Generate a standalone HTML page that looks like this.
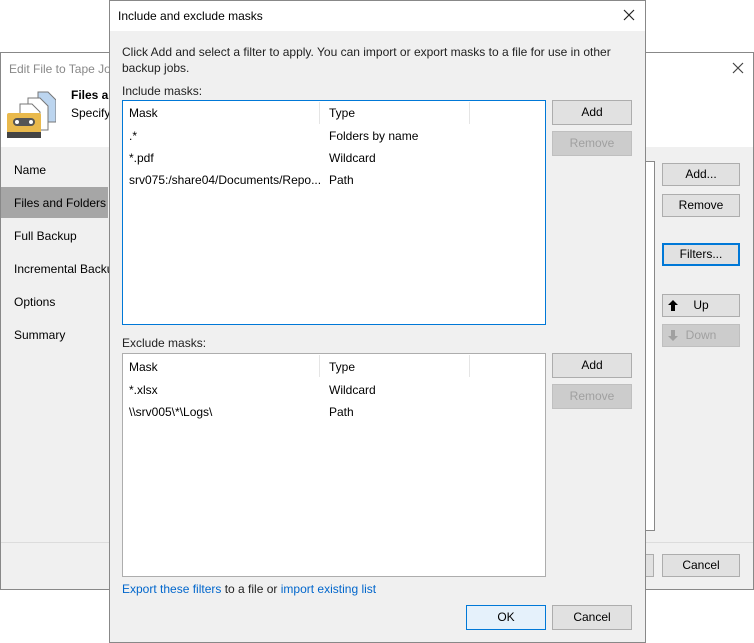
<!DOCTYPE html>
<html><head><style>
*{box-sizing:border-box;margin:0;padding:0}
body{width:754px;height:643px;position:relative;background:#fff;font-family:"Liberation Sans",sans-serif;font-size:12px;color:#000;overflow:hidden}
.a{position:absolute}
.btn{position:absolute;background:#e1e1e1;border:1px solid #adadad;text-align:center;line-height:21px}
.dis{color:#a0a0a0;background:#ccc;border-color:#bfbfbf}
.t{position:absolute;white-space:nowrap}
</style></head><body>
<!-- background window -->
<div class="a" style="left:0;top:52px;width:754px;height:538px;border:1px solid #888;background:#f0f0f0"></div>
<div class="a" style="left:1px;top:53px;width:752px;height:94px;background:#fff"></div>
<div class="t" style="left:9px;top:62px;color:#888">Edit File to Tape Job</div>
<svg class="a" style="left:732px;top:62px" width="12" height="12"><path d="M1 1L11 11M11 1L1 11" stroke="#444" stroke-width="1.2"/></svg>
<svg class="a" style="left:6px;top:88px" width="50" height="54">
<path d="M32 4h10l8 8v22H32z" fill="#bcd5ef" stroke="#777"/>
<path d="M22 10h12l8 8v24H22z" fill="#fff" stroke="#777"/>
<path d="M14 16h12l8 8v24H14z" fill="#fff" stroke="#777"/>
<rect x="1" y="25" width="34" height="25" rx="2" fill="#e9b94c"/>
<rect x="1" y="44" width="34" height="6" fill="#444"/>
<rect x="7" y="30" width="22" height="8" rx="4" fill="#555"/>
<circle cx="11" cy="34" r="2" fill="#fff"/><circle cx="25" cy="34" r="2" fill="#fff"/>
</svg>
<div class="t" style="left:71px;top:88px;font-weight:bold">Files and</div>
<div class="t" style="left:71px;top:106px">Specify</div>
<div class="a" style="left:1px;top:187px;width:107px;height:31px;background:#a6a6a6"></div>
<div class="t" style="left:14px;top:163px">Name</div>
<div class="t" style="left:14px;top:196px">Files and Folders</div>
<div class="t" style="left:14px;top:229px">Full Backup</div>
<div class="t" style="left:14px;top:262px">Incremental Backup</div>
<div class="t" style="left:14px;top:295px">Options</div>
<div class="t" style="left:14px;top:328px">Summary</div>
<div class="a" style="left:600px;top:161px;width:55px;height:370px;background:#fff;border:1px solid #888"></div>
<div class="btn" style="left:662px;top:163px;width:78px;height:23px">Add...</div>
<div class="btn" style="left:662px;top:194px;width:78px;height:23px">Remove</div>
<div class="btn" style="left:662px;top:243px;width:78px;height:23px;border:2px solid #0078d7;line-height:19px">Filters...</div>
<div class="btn" style="left:662px;top:294px;width:78px;height:23px">Up<svg class="a" style="left:5px;top:5px" width="10" height="11"><path d="M5 0L10 5H7V11H3V5H0Z" fill="#000"/></svg></div>
<div class="btn dis" style="left:662px;top:324px;width:78px;height:23px">Down<svg class="a" style="left:5px;top:5px" width="10" height="11"><path d="M5 11L10 6H7V0H3V6H0Z" fill="#a0a0a0"/></svg></div>
<div class="a" style="left:1px;top:542px;width:752px;height:1px;background:#dcdcdc"></div>
<div class="btn" style="left:580px;top:554px;width:74px;height:23px"></div>
<div class="btn" style="left:662px;top:554px;width:78px;height:23px">Cancel</div>

<!-- dialog -->
<div class="a" style="left:109px;top:0;width:537px;height:643px;border:1px solid #888;background:#f0f0f0"></div>
<div class="a" style="left:110px;top:1px;width:535px;height:30px;background:#fff"></div>
<div class="t" style="left:118px;top:9px">Include and exclude masks</div>
<svg class="a" style="left:623px;top:9px" width="12" height="12"><path d="M1 1L11 11M11 1L1 11" stroke="#222" stroke-width="1.2"/></svg>
<div class="t" style="left:122px;top:45px;color:#222">Click Add and select a filter to apply. You can import or export masks to a file for use in other</div>
<div class="t" style="left:122px;top:61px;color:#222">backup jobs.</div>
<div class="t" style="left:122px;top:84px;color:#222">Include masks:</div>
<div class="a" style="left:122px;top:100px;width:424px;height:225px;background:#fff;border:1px solid #0078d7"></div>
<div class="a" style="left:319px;top:102px;width:1px;height:22px;background:#e5e5e5"></div>
<div class="a" style="left:469px;top:102px;width:1px;height:22px;background:#e5e5e5"></div>
<div class="t" style="left:129px;top:106px">Mask</div><div class="t" style="left:329px;top:106px">Type</div>
<div class="t" style="left:129px;top:129px">.*</div><div class="t" style="left:329px;top:129px">Folders by name</div>
<div class="t" style="left:129px;top:151px">*.pdf</div><div class="t" style="left:329px;top:151px">Wildcard</div>
<div class="t" style="left:129px;top:173px">srv075:/share04/Documents/Repo...</div><div class="t" style="left:329px;top:173px">Path</div>
<div class="btn" style="left:552px;top:100px;width:80px;height:25px;line-height:23px">Add</div>
<div class="btn dis" style="left:552px;top:131px;width:80px;height:25px;line-height:23px">Remove</div>
<div class="t" style="left:122px;top:336px;color:#222">Exclude masks:</div>
<div class="a" style="left:122px;top:353px;width:424px;height:224px;background:#fff;border:1px solid #adadad"></div>
<div class="a" style="left:319px;top:355px;width:1px;height:22px;background:#e5e5e5"></div>
<div class="a" style="left:469px;top:355px;width:1px;height:22px;background:#e5e5e5"></div>
<div class="t" style="left:129px;top:360px">Mask</div><div class="t" style="left:329px;top:360px">Type</div>
<div class="t" style="left:129px;top:383px">*.xlsx</div><div class="t" style="left:329px;top:383px">Wildcard</div>
<div class="t" style="left:129px;top:405px">\\srv005\*\Logs\</div><div class="t" style="left:329px;top:405px">Path</div>
<div class="btn" style="left:552px;top:353px;width:80px;height:25px;line-height:23px">Add</div>
<div class="btn dis" style="left:552px;top:384px;width:80px;height:25px;line-height:23px">Remove</div>
<div class="t" style="left:122px;top:582px;color:#222"><span style="color:#0066cc">Export these filters</span> to a file or <span style="color:#0066cc">import existing list</span></div>
<div class="btn" style="left:466px;top:605px;width:80px;height:25px;background:#e5f1fb;border:1px solid #0078d7;line-height:23px">OK</div>
<div class="btn" style="left:552px;top:605px;width:80px;height:25px;line-height:23px">Cancel</div>
</body></html>
